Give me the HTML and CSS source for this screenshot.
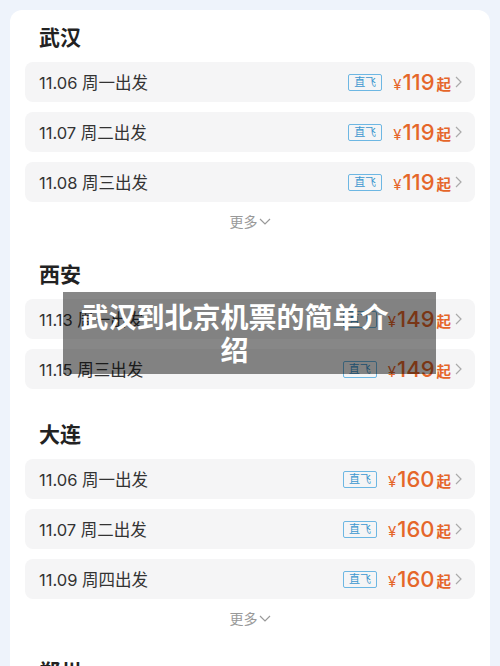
FILE: index.html
```html
<!DOCTYPE html>
<html lang="zh-CN">
<head>
    <meta charset="UTF-8">
    <meta name="viewport" content="width=device-width, initial-scale=1.0">
    <title>武汉到北京机票的简单介绍</title>
    <link rel="stylesheet" href="styles.css">
</head>
<body>
    <div class="card">
        <section class="city">
            <h2>武汉</h2>
            <ul class="flights">
                <li><span class="date">11.06 周一出发</span><span class="fare"><span class="tag">直飞</span><span class="price"><small>¥</small>119<b>起</b></span><svg class="arrow" viewBox="0 0 7 12"><polyline points="1,1 6,6 1,11"/></svg></span></li>
                <li><span class="date">11.07 周二出发</span><span class="fare"><span class="tag">直飞</span><span class="price"><small>¥</small>119<b>起</b></span><svg class="arrow" viewBox="0 0 7 12"><polyline points="1,1 6,6 1,11"/></svg></span></li>
                <li><span class="date">11.08 周三出发</span><span class="fare"><span class="tag">直飞</span><span class="price"><small>¥</small>119<b>起</b></span><svg class="arrow" viewBox="0 0 7 12"><polyline points="1,1 6,6 1,11"/></svg></span></li>
            </ul>
            <div class="more">更多<svg viewBox="0 0 12 7"><polyline points="1,1 6,6 11,1"/></svg></div>
        </section>

        <section class="city">
            <h2>西安</h2>
            <ul class="flights">
                <li><span class="date">11.13 周一出发</span><span class="fare"><span class="tag">直飞</span><span class="price"><small>¥</small>149<b>起</b></span><svg class="arrow" viewBox="0 0 7 12"><polyline points="1,1 6,6 1,11"/></svg></span></li>
                <li><span class="date">11.15 周三出发</span><span class="fare"><span class="tag">直飞</span><span class="price"><small>¥</small>149<b>起</b></span><svg class="arrow" viewBox="0 0 7 12"><polyline points="1,1 6,6 1,11"/></svg></span></li>
            </ul>
        </section>

        <section class="city">
            <h2>大连</h2>
            <ul class="flights">
                <li><span class="date">11.06 周一出发</span><span class="fare"><span class="tag">直飞</span><span class="price"><small>¥</small>160<b>起</b></span><svg class="arrow" viewBox="0 0 7 12"><polyline points="1,1 6,6 1,11"/></svg></span></li>
                <li><span class="date">11.07 周二出发</span><span class="fare"><span class="tag">直飞</span><span class="price"><small>¥</small>160<b>起</b></span><svg class="arrow" viewBox="0 0 7 12"><polyline points="1,1 6,6 1,11"/></svg></span></li>
                <li><span class="date">11.09 周四出发</span><span class="fare"><span class="tag">直飞</span><span class="price"><small>¥</small>160<b>起</b></span><svg class="arrow" viewBox="0 0 7 12"><polyline points="1,1 6,6 1,11"/></svg></span></li>
            </ul>
            <div class="more">更多<svg viewBox="0 0 12 7"><polyline points="1,1 6,6 11,1"/></svg></div>
        </section>

        <section class="city">
            <h2>郑州</h2>
        </section>
    </div>

    <div class="caption">
        <h1>武汉到北京机票的简单介绍</h1>
    </div>
</body>
</html>
```

FILE: styles.css
```css
html, body {
    overflow: hidden;
}

body {
    margin: 0;
    padding: 10px 10px 0;
    background-color: #eef3fb;
    font-family: Inter, "Noto Sans CJK SC", sans-serif;
    color: #333;
}

.card {
    background-color: #fff;
    border-radius: 12px;
    padding: 14px 15px 0;
}

.city {
    padding-bottom: 22px;
}

.city h2 {
    margin: 0 0 10px;
    padding-left: 14px;
    height: 28px;
    line-height: 28px;
    font-size: 21px;
    font-weight: 600;
    color: #222;
}

.flights {
    list-style-type: none;
    margin: 0;
    padding: 0;
}

.flights li {
    display: flex;
    align-items: center;
    justify-content: space-between;
    height: 40px;
    padding: 0 13px 0 14px;
    margin-bottom: 10px;
    background-color: #f5f5f6;
    border-radius: 8px;
}

.date {
    font-size: 16.5px;
    color: #333;
}

.fare {
    display: flex;
    align-items: center;
}

.tag {
    height: 15px;
    line-height: 15px;
    padding: 0 5px;
    margin-right: 11px;
    font-size: 11px;
    color: #3a97cf;
    border: 1px solid #6db7e3;
    border-radius: 2px;
}

.price {
    font-size: 22px;
    font-weight: 500;
    color: #e5662a;
    line-height: 1;
}

.price small {
    font-size: 15px;
    font-weight: 400;
    margin-right: 1px;
}

.price b {
    font-size: 14.5px;
    font-weight: 700;
    margin-left: 2px;
}

.arrow {
    width: 7px;
    height: 12px;
    margin-left: 4px;
    fill: none;
    stroke: #aaa;
    stroke-width: 1.2;
}

.more {
    height: 20px;
    line-height: 20px;
    margin-bottom: 7px;
    text-align: center;
    font-size: 14px;
    color: #999;
}

.more svg {
    width: 12px;
    height: 7px;
    margin-left: 1px;
    vertical-align: 2px;
    fill: none;
    stroke: #999;
    stroke-width: 1.2;
}

.caption {
    position: absolute;
    top: 292px;
    left: 63px;
    width: 373px;
    height: 82px;
    box-sizing: border-box;
    padding: 8px 43px 0 13px;
    background-color: rgba(0, 0, 0, 0.47);
}

.caption h1 {
    margin: 0;
    font-family: "Noto Sans CJK SC", sans-serif;
    font-size: 28px;
    font-weight: 700;
    line-height: 33px;
    text-align: center;
    color: #fff;
}
```
